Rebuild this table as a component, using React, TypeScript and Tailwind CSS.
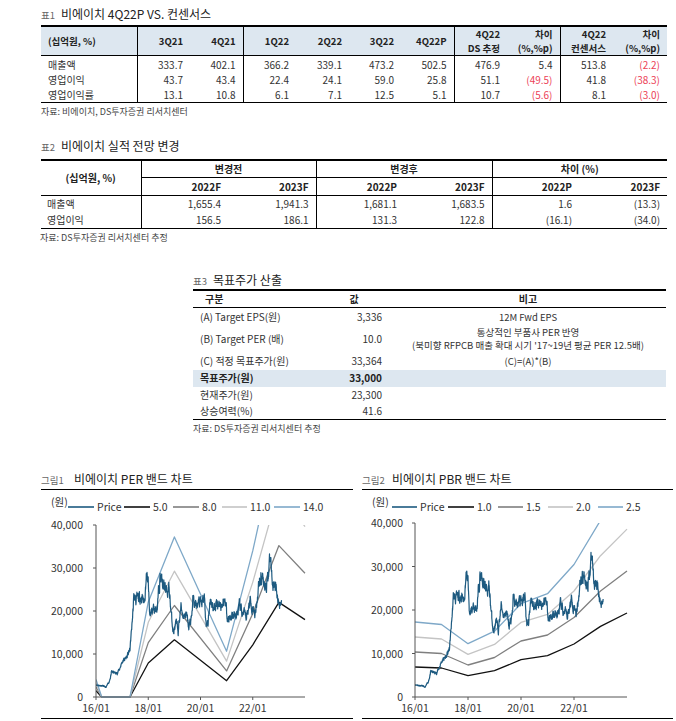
type Pt = [number, number];

// 주가 흐름 (연도, 원)
const PRICE_KEYS: Pt[] = [
  [2016.0, 2900], [2016.12, 2700], [2016.25, 2600], [2016.38, 2200], [2016.5, 3500],
  [2016.6, 5800], [2016.8, 5500], [2016.9, 6500], [2017.0, 8200], [2017.2, 9500],
  [2017.3, 11000], [2017.38, 17000], [2017.45, 23000], [2017.6, 22500], [2017.75, 23500],
  [2017.85, 22000], [2017.92, 28000], [2018.0, 26500], [2018.05, 19000], [2018.2, 20500],
  [2018.35, 21000], [2018.45, 28500], [2018.55, 26000], [2018.7, 24500], [2018.8, 25000],
  [2018.9, 18000], [2018.97, 15000], [2019.05, 17000], [2019.15, 15500], [2019.25, 21000],
  [2019.35, 19000], [2019.45, 19500], [2019.55, 16000], [2019.65, 18500], [2019.72, 23000],
  [2019.8, 21000], [2019.95, 22000], [2020.05, 21500], [2020.15, 23000], [2020.22, 16000],
  [2020.3, 17500], [2020.38, 23500], [2020.5, 20500], [2020.65, 22000], [2020.8, 21500],
  [2020.95, 22500], [2021.05, 18000], [2021.2, 19000], [2021.35, 18500], [2021.5, 21000],
  [2021.6, 19500], [2021.75, 18500], [2021.9, 22500], [2022.0, 21000], [2022.1, 19500],
  [2022.25, 27500], [2022.4, 28000], [2022.5, 26000], [2022.6, 29000], [2022.68, 32500],
  [2022.75, 26500], [2022.85, 27000], [2022.95, 22500], [2023.02, 21500], [2023.1, 23300],
];

function buildPrice(): Pt[] {
  let s = 11;
  const rnd = () => {
    s = (s * 16807) % 2147483647;
    return (s - 1) / 2147483646;
  };
  const out: Pt[] = [];
  let noise = 0;
  let i = 0;
  for (let t = 2016; t <= 2023.1; t += 1 / 150) {
    while (i < PRICE_KEYS.length - 2 && PRICE_KEYS[i + 1][0] < t) i++;
    const [t0, v0] = PRICE_KEYS[i];
    const [t1, v1] = PRICE_KEYS[i + 1];
    const f = Math.min(1, Math.max(0, (t - t0) / (t1 - t0)));
    noise = noise * 0.7 + (rnd() - 0.5) * 0.09;
    out.push([t, (v0 + (v1 - v0) * f) * (1 + noise)]);
  }
  return out;
}

const PRICE = buildPrice();

const EPS: Pt[] = [
  [2016.0, 290], [2016.22, 0], [2017.3, 0], [2018, 1580], [2019, 2660],
  [2021, 760], [2022, 2430], [2023, 4400], [2024, 3600],
];
const BPS: Pt[] = [
  [2016, 6900], [2017, 6670], [2018, 4900], [2019, 6050], [2020, 8580],
  [2021, 9500], [2022, 12180], [2023, 16240], [2024, 19300],
];

type Band = { mult: number; color: string };
type Legend = { a: number; b: number; label: string; color: string };

function BandChart({
  id, x0, x1, yTop, yBot, labelX, base, bands, legend, unitX,
}: {
  id: string; x0: number; x1: number; yTop: number; yBot: number; labelX: number;
  base: Pt[]; bands: Band[]; legend: Legend[]; unitX: number;
}) {
  const X = (t: number) => x0 + ((t - 2016) / 8) * (x1 - x0);
  const Y = (v: number) => yBot - (v / 40000) * (yBot - yTop);
  const path = (pts: Pt[]) =>
    pts.map(([t, v], k) => `${k ? "L" : "M"}${X(t).toFixed(1)},${Y(v).toFixed(1)}`).join("");
  return (
    <svg width={312} height={228} className="block" fontSize={10.5} fill="#333">
      <defs>
        <clipPath id={id}>
          <rect x={x0} y={yTop} width={x1 - x0 + 2} height={yBot - yTop + 1} />
        </clipPath>
      </defs>
      <text x={unitX} y={16}>(원)</text>
      {legend.map((l) => (
        <g key={l.label}>
          <line x1={l.a} x2={l.b} y1={17} y2={17} stroke={l.color} strokeWidth={1.6} />
          <text x={l.b + 3} y={21}>{l.label}</text>
        </g>
      ))}
      {[0, 10000, 20000, 30000, 40000].map((v) => (
        <g key={v}>
          <text x={labelX} y={Y(v) + 4} textAnchor="end">{v ? v.toLocaleString("en-US") : "0"}</text>
          <line x1={x0 - 3} x2={x0} y1={Y(v)} y2={Y(v)} stroke="#555" />
        </g>
      ))}
      {[2016, 2018, 2020, 2022].map((t) => (
        <g key={t}>
          <line x1={X(t)} x2={X(t)} y1={yBot} y2={yBot + 3} stroke="#555" />
          <text x={X(t)} y={yBot + 15} textAnchor="middle">{`${String(t).slice(2)}/01`}</text>
        </g>
      ))}
      <g clipPath={`url(#${id})`} fill="none" strokeLinejoin="round">
        {bands.map((b) => (
          <path key={b.mult} d={path(base.map(([t, v]) => [t, v * b.mult] as Pt))} stroke={b.color} strokeWidth={1.3} />
        ))}
        <path d={path(PRICE)} stroke="#1d5a80" strokeWidth={1.2} />
      </g>
      <line x1={x0} x2={x0} y1={yTop} y2={yBot} stroke="#555" />
      <line x1={x0} x2={x1} y1={yBot} y2={yBot} stroke="#555" />
    </svg>
  );
}

const T1_ROWS = [
  ["매출액", "333.7", "402.1", "366.2", "339.1", "473.2", "502.5", "476.9", "5.4", "513.8", "(2.2)"],
  ["영업이익", "43.7", "43.4", "22.4", "24.1", "59.0", "25.8", "51.1", "(49.5)", "41.8", "(38.3)"],
  ["영업이익률", "13.1", "10.8", "6.1", "7.1", "12.5", "5.1", "10.7", "(5.6)", "8.1", "(3.0)"],
];
const T1_W = [96, 53, 53, 53, 53, 52, 53, 53, 53, 53, 54];
const T1_SEP = [0, 2, 6, 8];

const T2_ROWS = [
  ["매출액", "1,655.4", "1,941.3", "1,681.1", "1,683.5", "1.6", "(13.3)"],
  ["영업이익", "156.5", "186.1", "131.3", "122.8", "(16.1)", "(34.0)"],
];

function Title({ tag, text }: { tag: string; text: string }) {
  return (
    <div className="flex items-baseline h-[16px] leading-[16px]">
      <span className="text-[9.5px] text-[#666] w-[20px]">{tag}</span>
      <span className="text-[12px] text-[#222]">{text}</span>
    </div>
  );
}

export default function App() {
  return (
    <div className="w-[676px] h-[721px] overflow-hidden bg-white text-[#333] font-['Noto_Sans_CJK_KR',sans-serif] pl-[41px] pt-[6px]">
      {/* 표1 */}
      <Title tag="표1" text="비에이치 4Q22P VS. 컨센서스" />
      <table className="mt-[3px] table-fixed border-collapse border-t-2 border-b border-black text-[10px] w-[626px]">
        <colgroup>
          {T1_W.map((w, k) => <col key={k} style={{ width: w }} />)}
        </colgroup>
        <thead>
          <tr className="h-[28px] bg-[#dde7f0] border-b border-black font-bold text-[#222] text-[9.5px] leading-[14px]">
            <th className="text-left pl-[7px] border-r border-black">(십억원, %)</th>
            {["3Q21", "4Q21", "1Q22", "2Q22", "3Q22", "4Q22P"].map((h, k) => (
              <th key={h} className={`text-right pr-[7px] ${k === 1 || k === 5 ? "border-r border-black" : ""}`}>{h}</th>
            ))}
            <th className="text-right pr-[7px]">4Q22<br />DS 추정</th>
            <th className="text-right pr-[7px] border-r border-black">차이<br />(%,%p)</th>
            <th className="text-right pr-[7px]">4Q22<br />컨센서스</th>
            <th className="text-right pr-[7px]">차이<br />(%,%p)</th>
          </tr>
        </thead>
        <tbody>
          {T1_ROWS.map((r, ri) => (
            <tr key={ri} className={`h-[15px] leading-[15px] ${ri === 0 ? "[&>td]:pt-[1px]" : ""}`}>
              {r.map((c, k) => (
                <td
                  key={k}
                  className={`${k === 0 ? "text-left pl-[7px]" : "text-right pr-[7px]"} ${T1_SEP.includes(k) || k === 6 ? "border-r border-black" : ""} ${c.startsWith("(") ? "text-[#ec4257]" : ""}`}
                >
                  {c}
                </td>
              ))}
            </tr>
          ))}
        </tbody>
      </table>
      <div className="text-[9px] text-[#444] mt-[3px] leading-[12px]">자료: 비에이치, DS투자증권 리서치센터</div>

      {/* 표2 */}
      <div className="mt-[20px]">
        <Title tag="표2" text="비에이치 실적 전망 변경" />
      </div>
      <table className="mt-[5px] table-fixed border-collapse border-t-2 border-b border-black text-[10px] w-[626px]">
        <colgroup>
          {[100, 87, 88, 88, 88, 87, 88].map((w, k) => <col key={k} style={{ width: w }} />)}
        </colgroup>
        <thead className="font-bold text-[#222]">
          <tr className="h-[17px] leading-[16px]">
            <th rowSpan={2} className="border-r border-b border-black text-center">(십억원, %)</th>
            <th colSpan={2} className="border-r border-b border-black text-center">변경전</th>
            <th colSpan={2} className="border-r border-b border-black text-center">변경후</th>
            <th colSpan={2} className="border-b border-black text-center">차이 (%)</th>
          </tr>
          <tr className="h-[18px] leading-[16px] border-b border-black">
            {["2022F", "2023F", "2022P", "2023F", "2022P", "2023F"].map((h, k) => (
              <th key={k} className={`text-right pr-[7px] ${k === 1 || k === 3 ? "border-r border-black" : ""}`}>{h}</th>
            ))}
          </tr>
        </thead>
        <tbody>
          {T2_ROWS.map((r, ri) => (
            <tr key={ri} className="h-[16px] leading-[16px]">
              {r.map((c, k) => (
                <td
                  key={k}
                  className={`${k === 0 ? "text-left pl-[6px]" : "text-right pr-[7px]"} ${k === 0 || k === 2 || k === 4 ? "border-r border-black" : ""}`}
                >
                  {c}
                </td>
              ))}
            </tr>
          ))}
        </tbody>
      </table>
      <div className="text-[9px] text-[#444] mt-[3px] leading-[12px] -ml-[1px]">자료: DS투자증권 리서치센터 추정</div>

      {/* 표3 */}
      <div className="ml-[152px] mt-[28px] w-[473px]">
        <Title tag="표3" text="목표주가 산출" />
        <table className="mt-[1px] table-fixed border-collapse border-t-2 border-b-[1.5px] border-black text-[10px] w-[473px]">
          <colgroup>
            <col style={{ width: 125 }} />
            <col style={{ width: 72 }} />
            <col style={{ width: 276 }} />
          </colgroup>
          <thead className="font-bold text-[#222]">
            <tr className="h-[17px] leading-[16px] border-b border-black">
              <th className="text-left pl-[12px]">구분</th>
              <th className="text-center">값</th>
              <th className="text-center">비고</th>
            </tr>
          </thead>
          <tbody className="leading-[14px]">
            <tr className="h-[18px]">
              <td className="pl-[7px]">(A) Target EPS(원)</td>
              <td className="text-right pr-[8px]">3,336</td>
              <td className="text-center text-[9.5px]">12M Fwd EPS</td>
            </tr>
            <tr className="h-[26px]">
              <td className="pl-[7px]">(B) Target PER (배)</td>
              <td className="text-right pr-[8px]">10.0</td>
              <td className="text-center text-[9.5px] leading-[13px]">
                통상적인 부품사 PER 반영<br />(북미향 RFPCB 매출 확대 시기 '17~19년 평균 PER 12.5배)
              </td>
            </tr>
            <tr className="h-[18px]">
              <td className="pl-[7px]">(C) 적정 목표주가(원)</td>
              <td className="text-right pr-[8px]">33,364</td>
              <td className="text-center text-[9.5px]">(C)=(A)*(B)</td>
            </tr>
            <tr className="h-[17px] bg-[#dde7f0] font-bold text-[#222]">
              <td className="pl-[7px]">목표주가(원)</td>
              <td className="text-right pr-[8px]">33,000</td>
              <td />
            </tr>
            <tr className="h-[16px]">
              <td className="pl-[7px]">현재주가(원)</td>
              <td className="text-right pr-[8px]">23,300</td>
              <td />
            </tr>
            <tr className="h-[17px]">
              <td className="pl-[7px]">상승여력(%)</td>
              <td className="text-right pr-[8px]">41.6</td>
              <td />
            </tr>
          </tbody>
        </table>
        <div className="text-[9px] text-[#444] mt-[3px] leading-[12px]">자료: DS투자증권 리서치센터 추정</div>
      </div>

      {/* 차트 */}
      <div className="flex gap-[9px] mt-[36px]">
        <div className="w-[312px] border-b border-black">
          <div className="border-b border-black pb-[2px]">
            <div className="flex items-baseline h-[16px] leading-[16px]">
              <span className="text-[9.5px] text-[#666] w-[33px]">그림1</span>
              <span className="text-[12px] text-[#222]">비에이치 PER 밴드 차트</span>
            </div>
          </div>
          <BandChart
            id="c1"
            x0={55} x1={264} yTop={35} yBot={207} labelX={42} unitX={10}
            base={EPS}
            bands={[
              { mult: 5, color: "#111" },
              { mult: 8, color: "#7f7f7f" },
              { mult: 11, color: "#c4c4c4" },
              { mult: 14, color: "#7ea8c8" },
            ]}
            legend={[
              { a: 27, b: 53, label: "Price", color: "#1d5a80" },
              { a: 83, b: 109, label: "5.0", color: "#111" },
              { a: 132, b: 158, label: "8.0", color: "#7f7f7f" },
              { a: 181, b: 206, label: "11.0", color: "#c4c4c4" },
              { a: 233, b: 259, label: "14.0", color: "#7ea8c8" },
            ]}
          />
        </div>
        <div className="w-[311px] border-b border-black">
          <div className="border-b border-black pb-[2px]">
            <div className="flex items-baseline h-[16px] leading-[16px]">
              <span className="text-[9.5px] text-[#666] w-[30px]">그림2</span>
              <span className="text-[12px] text-[#222]">비에이치 PBR 밴드 차트</span>
            </div>
          </div>
          <BandChart
            id="c2"
            x0={53} x1={265} yTop={33} yBot={207} labelX={41} unitX={10}
            base={BPS}
            bands={[
              { mult: 1, color: "#111" },
              { mult: 1.5, color: "#7f7f7f" },
              { mult: 2, color: "#c4c4c4" },
              { mult: 2.5, color: "#7ea8c8" },
            ]}
            legend={[
              { a: 30, b: 55, label: "Price", color: "#1d5a80" },
              { a: 86, b: 112, label: "1.0", color: "#111" },
              { a: 136, b: 161, label: "1.5", color: "#7f7f7f" },
              { a: 186, b: 211, label: "2.0", color: "#c4c4c4" },
              { a: 236, b: 261, label: "2.5", color: "#7ea8c8" },
            ]}
          />
        </div>
      </div>
    </div>
  );
}
